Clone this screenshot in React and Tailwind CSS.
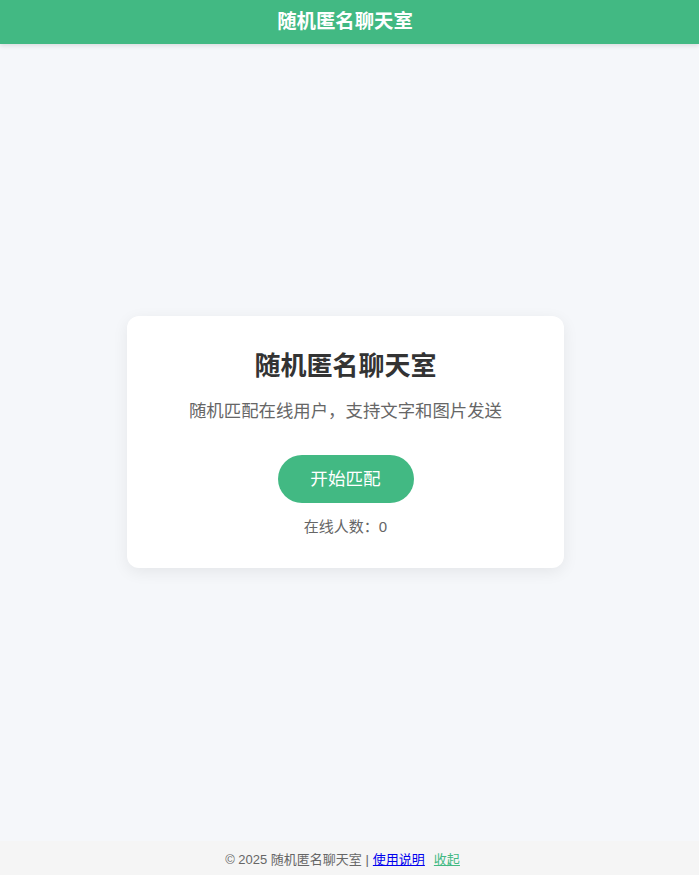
export default function App() {
  const font = { fontFamily: '"Liberation Sans", "Noto Sans CJK SC", sans-serif' };
  return (
    <div className="min-h-screen flex flex-col bg-[#f5f7fa]" style={font}>
      <header className="h-[44px] shrink-0 bg-[#42b983] flex items-center justify-center pr-[9px] shadow-[0_2px_4px_rgba(0,0,0,0.1)] relative z-10">
        <h1 className="text-white font-bold text-[19.4px] leading-none">随机匿名聊天室</h1>
      </header>
      <main className="flex-1 flex items-center justify-center pr-[8px] pb-[1px]">
        <div className="w-[437px] bg-white rounded-[12px] shadow-[0_4px_16px_rgba(0,0,0,0.07)] pt-[32px] pb-[31px] flex flex-col items-center">
          <h2 className="text-[#333] font-bold text-[26px] leading-[36px]">随机匿名聊天室</h2>
          <p className="mt-[15px] text-[#666] text-[17.4px] leading-[24px]">随机匹配在线用户，支持文字和图片发送</p>
          <button className="mt-[32px] h-[48px] w-[136px] rounded-full bg-[#42b983] text-white text-[17.6px]">开始匹配</button>
          <div className="mt-[13px] text-[#666] text-[15px] leading-[21px]">在线人数：0</div>
        </div>
      </main>
      <footer className="h-[34px] shrink-0 bg-[#f5f5f5] flex items-start justify-center pt-[9px] pr-[14px] text-[13px] leading-[20px] text-[#666]">
        <span>© 2025 随机匿名聊天室 | </span>
        <a href="#" className="ml-[4px] text-[#0000ee] underline">使用说明</a>
        <a href="#" className="ml-[9px] text-[#42b983] underline">收起</a>
      </footer>
    </div>
  );
}
